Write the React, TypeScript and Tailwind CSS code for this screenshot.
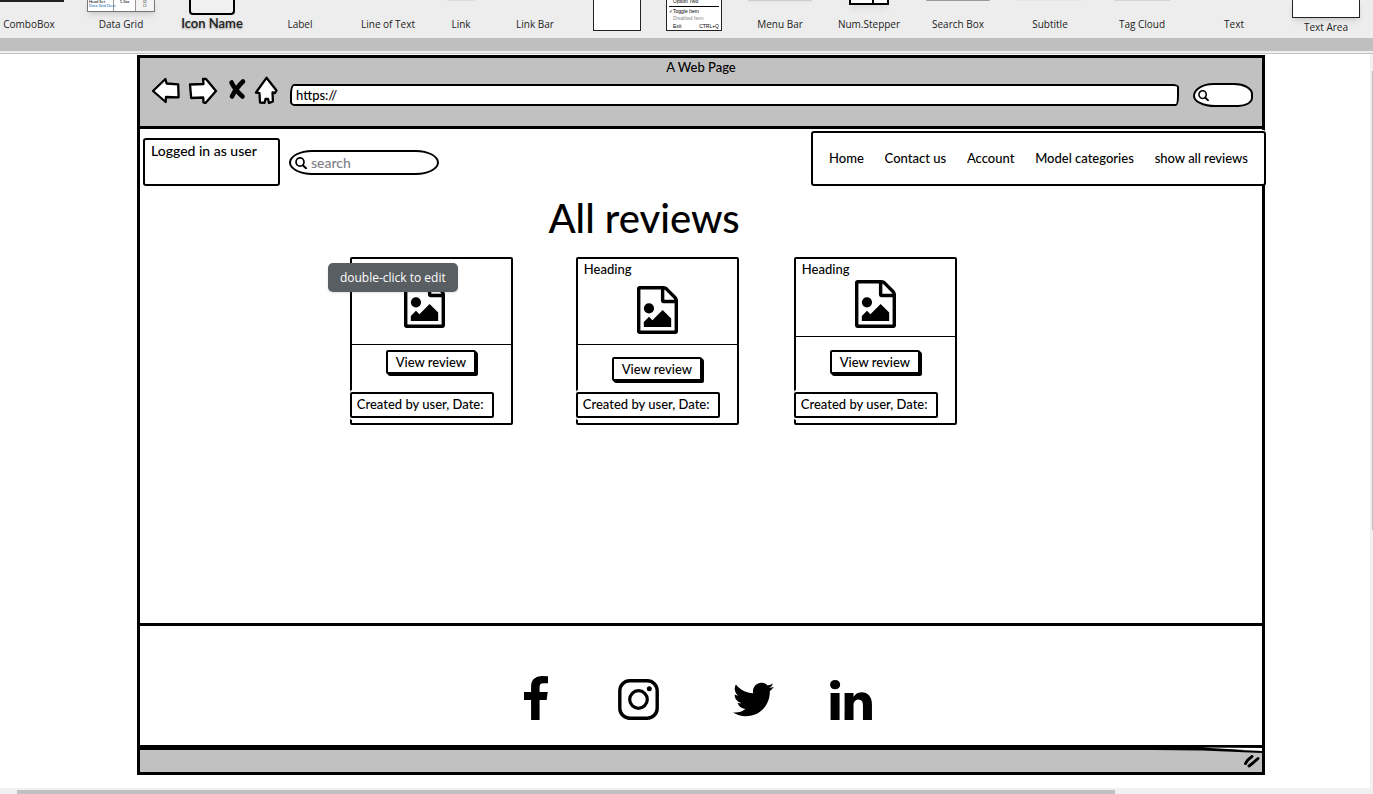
import type { ReactNode } from "react";
import { FaTwitter } from "react-icons/fa";

const label = "font-['Open_Sans','Noto_Sans',sans-serif] text-[10px] leading-[14px] whitespace-nowrap text-[#222]";

function Tool({ name, low, children }: { name?: string; low?: boolean; children?: ReactNode }) {
  return (
    <li className={`flex min-w-0 flex-col items-center justify-start ${low ? "h-[34px]" : "h-[31px]"}`}>
      <div className="flex min-h-0 flex-1 items-start justify-center" aria-hidden="true">
        {children}
      </div>
      {name && <span className={label}>{name}</span>}
    </li>
  );
}

function Toolbar() {
  return (
    <ul className="-mr-[15px] grid h-[38px] grid-cols-[58fr_126fr_56fr_120fr_56fr_90fr_58fr_106fr_48fr_124fr_54fr_124fr_60fr_124fr_60fr_124fr] bg-[#ededed]">
      <Tool name="ComboBox">
        <div className="ml-1 h-[2px] w-[66px] bg-[#222] shadow-md" />
      </Tool>
      <Tool name="Data Grid">
        <div className="grid h-3 w-[68px] grid-cols-[26px_1fr_18px] overflow-hidden border border-t-0 border-[#777] bg-white text-[4px] leading-[4px] whitespace-nowrap text-black shadow-md">
          <div className="border-r border-[#999] pl-px">Head Set<br /><span className="text-[#2874b8]">Data Grid Desc</span></div>
          <div className="border-r border-[#999] text-center">1.2xx</div>
          <div className="bg-[#f4f4f4] text-center">☑<br />☐</div>
        </div>
      </Tool>
      <li className="flex h-[31px] min-w-0 flex-col items-center">
        <div className="h-4 w-[46px] rounded-b border-2 border-t-0 border-black bg-[#f0f0f0]" />
        <span className="font-['Lato',sans-serif] text-[13px] leading-4 font-semibold whitespace-nowrap text-[#222] [text-shadow:0_1px_2px_#999]">Icon Name</span>
      </li>
      <Tool name="Label" />
      <Tool name="Line of Text" />
      <Tool name="Link"><div className="h-px w-7 bg-[#dcdcdc]" /></Tool>
      <Tool name="Link Bar" />
      <Tool><div className="h-[31px] w-12 border border-t-0 border-[#222] bg-white" /></Tool>
      <Tool>
        <div className="h-[31px] w-14 shrink-0 overflow-hidden border border-t-0 border-[#222] bg-white px-[6px] font-['Liberation_Sans',sans-serif] text-[5px] leading-[6px] whitespace-nowrap text-black">
          <div className="-mt-[2px]">Option Two</div>
          <div className="-mx-1 mt-[2px] border-t border-black" />
          <div className="-ml-1 pt-px">✓Toggle Item</div>
          <div className="pt-px text-[#888]">Disabled Item</div>
          <div className="-mr-1 flex justify-between pt-[2px]"><span>Exit</span><span>CTRL+Q</span></div>
        </div>
      </Tool>
      <Tool name="Menu Bar"><div className="h-px w-16 bg-[#cfcfcf] shadow" /></Tool>
      <Tool name="Num.Stepper">
        <div className="flex h-[5px] w-10 border-2 border-t-0 border-black bg-white shadow-md">
          <div className="w-[23px] border-r-2 border-black" />
        </div>
      </Tool>
      <Tool name="Search Box"><div className="h-px w-16 rounded-b bg-[#999] shadow-md" /></Tool>
      <Tool name="Subtitle"><div className="h-px w-16 bg-[#e4e4e4]" /></Tool>
      <Tool name="Tag Cloud"><div className="h-px w-14 bg-[#d4d4d4]" /></Tool>
      <Tool name="Text" />
      <Tool name="Text Area" low>
        <div className="h-[18px] w-[68px] border border-t-0 border-[#222] bg-white shadow-md" />
      </Tool>
    </ul>
  );
}

function Magnifier({ className }: { className: string }) {
  return (
    <svg viewBox="0 0 12 12" className={className} fill="none" stroke="#000" aria-hidden="true">
      <ellipse cx="5" cy="5" rx="4" ry="4.2" strokeWidth="1.7" />
      <path d="M7.8 8.2 11 11.3" strokeWidth="2" strokeLinecap="round" />
    </svg>
  );
}

function BrowserBar() {
  return (
    <header className="flex h-[74px] flex-col border-y-[3px] border-black bg-[#c1c1c1]">
      <p className="text-center leading-[18px]">A Web Page</p>
      <div className="flex items-start pr-[9px] pl-3">
        <div className="flex shrink-0">
          <button type="button" aria-label="Back">
            <svg width="28" height="28" viewBox="0 0 28 28" fill="#fff" stroke="#000" strokeWidth="2.3" strokeLinejoin="round">
              <path d="M1 15 13.400 3 14.600 7.500 26.200 8.300 26.600 21.300 14 21 13.700 26z" />
            </svg>
          </button>
          <button type="button" aria-label="Forward" className="ml-2">
            <svg width="30" height="28" viewBox="0 0 30 28" fill="#fff" stroke="#000" strokeWidth="2.3" strokeLinejoin="round">
              <path d="M2 8.500 15.500 8 15 3 18 3 28 15 17.500 27 15.500 26.500 15.200 21.500 3.200 22z" />
            </svg>
          </button>
          <button type="button" aria-label="Stop" className="ml-[9px]">
            <svg width="20" height="28" viewBox="0 0 20 28" fill="none" stroke="#000" strokeLinecap="round">
              <path d="M4.500 6.500Q8 14 15.500 20.500" strokeWidth="4.600" />
              <path d="M16 5.500Q9 12 5 20.500" strokeWidth="4.600" />
            </svg>
          </button>
          <button type="button" aria-label="Home" className="ml-[7px]">
            <svg width="24" height="28" viewBox="0 0 24 28" fill="#fff" stroke="#000" strokeWidth="2.3" strokeLinejoin="round">
              <path d="M12.500 1.800 22.500 14.500 21 17 18.500 16.500 18.900 25.500 15 27 14 22.800 11.500 23 10.500 26.800 6 26.500 5.500 17.200 2 16.500z" />
            </svg>
          </button>
        </div>
        <input
          aria-label="Address"
          defaultValue="https://"
          className="mt-2 ml-3 h-[22px] min-w-0 flex-1 rounded-[4px_6px_3px_5px/10px_3px_10px_4px] border-2 border-black bg-white px-1 font-medium outline-none"
        />
        <label className="mt-[7px] ml-[14px] flex h-6 w-[60px] shrink-0 items-center rounded-[22px_20px_16px_24px/14px_12px_10px_12px] border-2 border-black bg-white pl-[3px]">
          <Magnifier className="size-[11px] shrink-0" />
          <input aria-label="Browser search" className="w-8 bg-transparent outline-none" />
        </label>
      </div>
    </header>
  );
}

function FileImage() {
  return (
    <svg width="41" height="48" viewBox="0 0 1536 1792" className="mx-auto block" role="img" aria-label="Image">
      <path d="M1468 380q28 28 48 76t20 88v1152q0 40-28 68t-68 28h-1344q-40 0-68-28t-28-68v-1600q0-40 28-68t68-28h896q40 0 88 20t76 48zm-444-244v376h376q-10-29-22-41l-313-313q-12-12-41-22zm384 1528v-1024h-416q-40 0-68-28t-28-68v-416h-768v1536h1280zm-128-448v320h-1024v-192l192-192 128 128 384-384zm-832-192q-80 0-136-56t-56-136 56-136 136-56 136 56 56 136-56 136-136 56z" />
    </svg>
  );
}

type CardProps = { heading?: string; media: string; action: string; pic: string; hint?: string };

function ReviewCard({ heading, media, action, pic, hint }: CardProps) {
  return (
    <article className="relative h-[168px] w-[163px] rounded-[2px] border-2 border-black bg-white">
      <div className={`${media} border-b border-black`}>
        <h2 className="h-[21px] pl-[6px] leading-[21px]">{heading}</h2>
        <div className={pic}><FileImage /></div>
      </div>
      <div className={`${action} flex h-[42px] items-start pl-[34px]`}>
        <button type="button" className="h-6 w-[90px] rounded-[2px] border-2 border-black bg-white leading-5 whitespace-nowrap shadow-[1px_1px_0_#000,2px_2px_0_#000]">
          View review
        </button>
      </div>
      <p className="-ml-[2px] h-[26px] w-[144px] rounded-[2px] border-2 border-black bg-white pl-[5px] leading-[20px] whitespace-nowrap shadow-[0_2px_0_#fff,0_-2px_0_#fff]">
        Created by user, Date:
      </p>
      {hint && (
        <div role="tooltip" className="absolute top-1 -left-6 flex h-[29px] w-[130px] items-center justify-center rounded-[5px] bg-[#595e62] font-['Open_Sans','Noto_Sans',sans-serif] text-[12px] font-medium whitespace-nowrap text-white shadow">
          {hint}
        </div>
      )}
    </article>
  );
}

function Social() {
  return (
    <footer className="-mx-[3px] flex h-[124px] items-center rounded-[2px] border-x-[3px] border-t-[3px] border-b-2 border-black bg-white pt-6 pl-[34.2%]">
      <div className="grid grid-cols-[94px_115px_97px_42px] items-end">
        <a href="#facebook" aria-label="Facebook">
          <svg width="24" height="44" viewBox="479 0 864 1664" preserveAspectRatio="none" className="block">
            <path d="M1343 12v264h-157q-86 0-116 36t-30 108v189h293l-39 296h-254v759h-306v-759h-255v-296h255v-218q0-186 104-288.5t277-102.5q147 0 228 12z" />
          </svg>
        </a>
        <a href="#instagram" aria-label="Instagram">
          <svg width="41" height="41" viewBox="0 0 41 41" fill="none" stroke="#000" className="block">
            <rect x="1.8" y="1.8" width="37.4" height="37.4" rx="10" strokeWidth="3.4" />
            <circle cx="20.5" cy="20.5" r="8.800" strokeWidth="3.200" />
            <circle cx="31.3" cy="9.800" r="2.500" fill="#000" stroke="none" />
          </svg>
        </a>
        <a href="#twitter" aria-label="Twitter"><FaTwitter size={41} className="block" /></a>
        <a href="#linkedin" aria-label="LinkedIn">
          <svg width="42" height="40" viewBox="128 148 1536 1468" className="block">
            <path d="M477 625v991h-330v-991h330zm21-306q1 73-50.5 122t-135.500 49h-2q-82 0-132-49t-50-122q0-74 51.500-122.500t134.500-48.500 133 48.500 51 122.500zm1166 729v568h-329v-530q0-105-40.500-164.500t-126.500-59.500q-63 0-105.500 34.500t-63.500 85.500q-11 30-11 81v553h-329q2-399 2-647t-1-296l-1-48h329v144h-2q20-32 41-56t56.500-52 87-43.500 114.500-15.500q171 0 275 113.500t104 332.500z" />
          </svg>
        </a>
      </div>
    </footer>
  );
}

function StatusBar() {
  return (
    <div className="relative flex h-7 items-center justify-end border-t-[3px] border-b-[3px] border-black bg-[#c1c1c1] pr-[2px]">
      <svg width="110" height="8" viewBox="0 0 110 8" className="absolute -top-[3px] right-0" aria-hidden="true">
        <path d="M50 0.500 110 1V4z" fill="#fff" />
        <path d="M0 2 50 2.500 110 5" fill="none" stroke="#000" strokeWidth="2" />
      </svg>
      <svg width="17" height="14" viewBox="0 0 17 14" fill="none" stroke="#000" strokeWidth="3" strokeLinecap="round" aria-hidden="true">
        <path d="M2.500 9.500Q4.500 5.500 9 2.500M6 12Q9.500 9.500 15 4.500" />
      </svg>
    </div>
  );
}

export default function App() {
  return (
    <div className="flex h-screen flex-col overflow-hidden bg-white font-['Lato','Noto_Sans',sans-serif] text-[13px] font-medium text-black">
      <Toolbar />
      <div className="h-[13px] shrink-0 bg-[#bfbfbf]" />
      <div className="h-[3px] shrink-0 border-b border-[#c4c4c4] bg-[#eee]" />
      <div className="flex min-h-0 flex-1">
        <div className="mt-px mr-[105px] mb-[13px] ml-[137px] flex min-w-0 flex-1 flex-col border-x-[3px] border-black">
          <BrowserBar />
          <main className="flex-1 bg-white">
            <div className="flex items-start">
              <div className="mt-[9px] ml-[3px] h-12 w-[137px] rounded-[3px] border-2 border-black pl-[6px] text-[14px] leading-[22px]">
                Logged in as user
              </div>
              <label className="mt-[21px] ml-[9px] flex h-[25px] w-[150px] items-center rounded-[24px/13px] border-2 border-black pl-1">
                <Magnifier className="size-3 shrink-0" />
                <input placeholder="search" aria-label="Search reviews" className="ml-1 w-28 bg-transparent text-[14px] outline-none placeholder:text-[#808088]" />
              </label>
              <nav className="relative mt-[2px] -mr-1 ml-auto flex h-[55px] w-[455px] items-center justify-between rounded-[3px] border-2 border-black bg-white px-4 shadow-[0_-1px_0_#fff]">
                <a href="#home">Home</a>
                <a href="#contact">Contact us</a>
                <a href="#account">Account</a>
                <a href="#models">Model categories</a>
                <a href="#reviews">show all reviews</a>
              </nav>
            </div>
            <h1 className="mt-[7px] pl-[36.4%] text-[40px] leading-[50px] whitespace-nowrap">All reviews</h1>
            <div className="mt-[14px] grid grid-cols-[226px_218px_163px] pl-[18.7%]">
              <ReviewCard media="h-[86px]" action="mt-[5px]" pic="pr-[14px]" hint="double-click to edit" />
              <ReviewCard heading="Heading" media="h-[86px]" action="mt-[12px] -mb-[7px]" pic="mt-[6px]" />
              <ReviewCard heading="Heading" media="h-[78px]" action="mt-[13px]" pic="mt-0" />
            </div>
          </main>
          <Social />
          <StatusBar />
        </div>
        <div className="flex w-[3px] shrink-0 justify-end bg-[#f0f0f0] pt-[17px]">
          <div className="h-[64%] w-px bg-[#bbb]" />
        </div>
      </div>
      <div className="flex h-[6px] shrink-0 bg-[#f0f0f0] pt-[2px] pl-[17px]">
        <div className="w-[81%] bg-[#c0c0c0]" />
      </div>
    </div>
  );
}
